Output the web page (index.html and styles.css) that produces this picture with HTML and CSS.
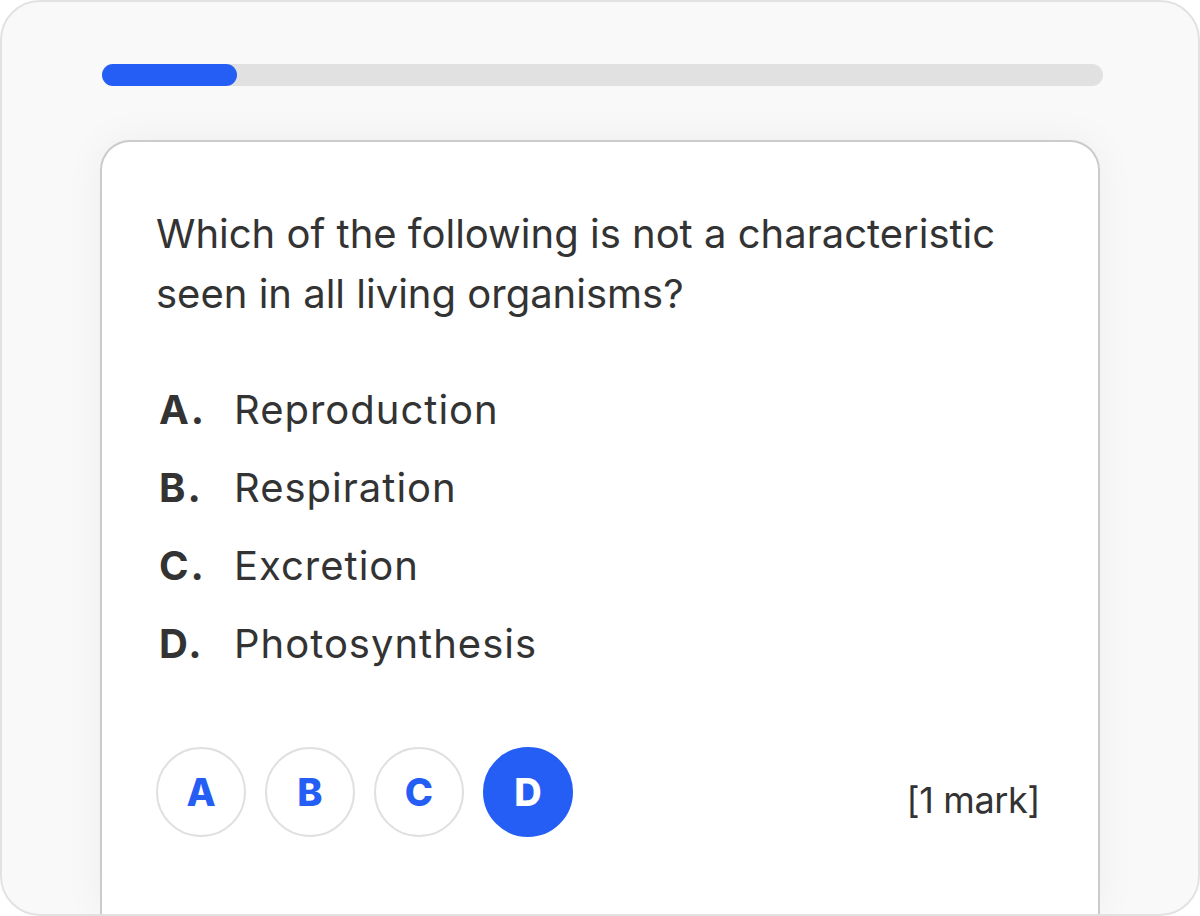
FILE: index.html
```html
<!DOCTYPE html>
<html>
<head>
<title>Quiz Question</title>
<link rel="stylesheet" href="styles.css">
</head>
<body>

<div class="frame">
  <div class="progress"><div class="progress-fill"></div></div>

  <div class="card">
    <p class="question">Which of the following is not a characteristic seen in all living organisms?</p>

    <ul class="options">
      <li><span class="opt-label">A.</span> <span class="opt-text">Reproduction</span></li>
      <li><span class="opt-label">B.</span> <span class="opt-text">Respiration</span></li>
      <li><span class="opt-label">C.</span> <span class="opt-text">Excretion</span></li>
      <li><span class="opt-label">D.</span> <span class="opt-text">Photosynthesis</span></li>
    </ul>

    <div class="answer-row">
      <div class="choices">
        <button class="choice">A</button>
        <button class="choice">B</button>
        <button class="choice">C</button>
        <button class="choice selected">D</button>
      </div>
      <span class="marks">[1 mark]</span>
    </div>
  </div>
</div>

</body>
</html>
```

FILE: styles.css
```css
html, body {
    margin : 0;
    padding : 0;
    background : #fff;
}
body {
    font-family : Inter, "Open Sans", sans-serif;
    color : #333;
}

.frame {
    box-sizing : border-box;
    height : 916px;
    border : 2px solid #e2e2e2;
    border-radius : 40px;
    background : #f9f9f9;
    padding : 62px 98px 0;
    display : flex;
    flex-direction : column;
    overflow : hidden;
}

.progress {
    height : 22px;
    margin : 0 -3px 0 2px;
    border-radius : 11px;
    background : #e1e1e1;
}
.progress-fill {
    width : 135px;
    height : 100%;
    border-radius : 11px;
    background : #255ef5;
}

.card {
    flex : 1;
    margin-top : 54px;
    background : #fff;
    border : 2px solid #cbcbcb;
    border-bottom : none;
    border-radius : 30px 30px 0 0;
    box-shadow : 0 0 40px rgba(0, 0, 0, 0.05);
    padding : 62px 58px 0 54px;
}

.question {
    margin : 0;
    font-size : 40px;
    line-height : 60px;
    letter-spacing : 0;
    max-width : 860px;
}

.options {
    list-style : none;
    margin : 47px 0 0;
    padding : 0;
}
.options li {
    display : flex;
    font-size : 40px;
    line-height : 78px;
    letter-spacing : 1px;
}
.opt-label {
    width : 78px;
    padding-left : 3px;
    box-sizing : border-box;
    font-weight : 700;
    letter-spacing : 2px;
}

.answer-row {
    margin-top : 64px;
    display : flex;
    align-items : center;
    justify-content : space-between;
}
.choices {
    display : flex;
    gap : 19px;
}
.choice {
    box-sizing : border-box;
    width : 90px;
    height : 90px;
    border-radius : 50%;
    border : 2px solid #e0e0e0;
    background : #fff;
    color : #255ef5;
    font-family : Inter, sans-serif;
    font-size : 38px;
    font-weight : 800;
    padding : 0;
}
.choice.selected {
    background : #255ef5;
    border-color : #255ef5;
    color : #fff;
}
.marks {
    font-size : 36px;
    letter-spacing : -0.4px;
    padding-top : 16px;
}
```
